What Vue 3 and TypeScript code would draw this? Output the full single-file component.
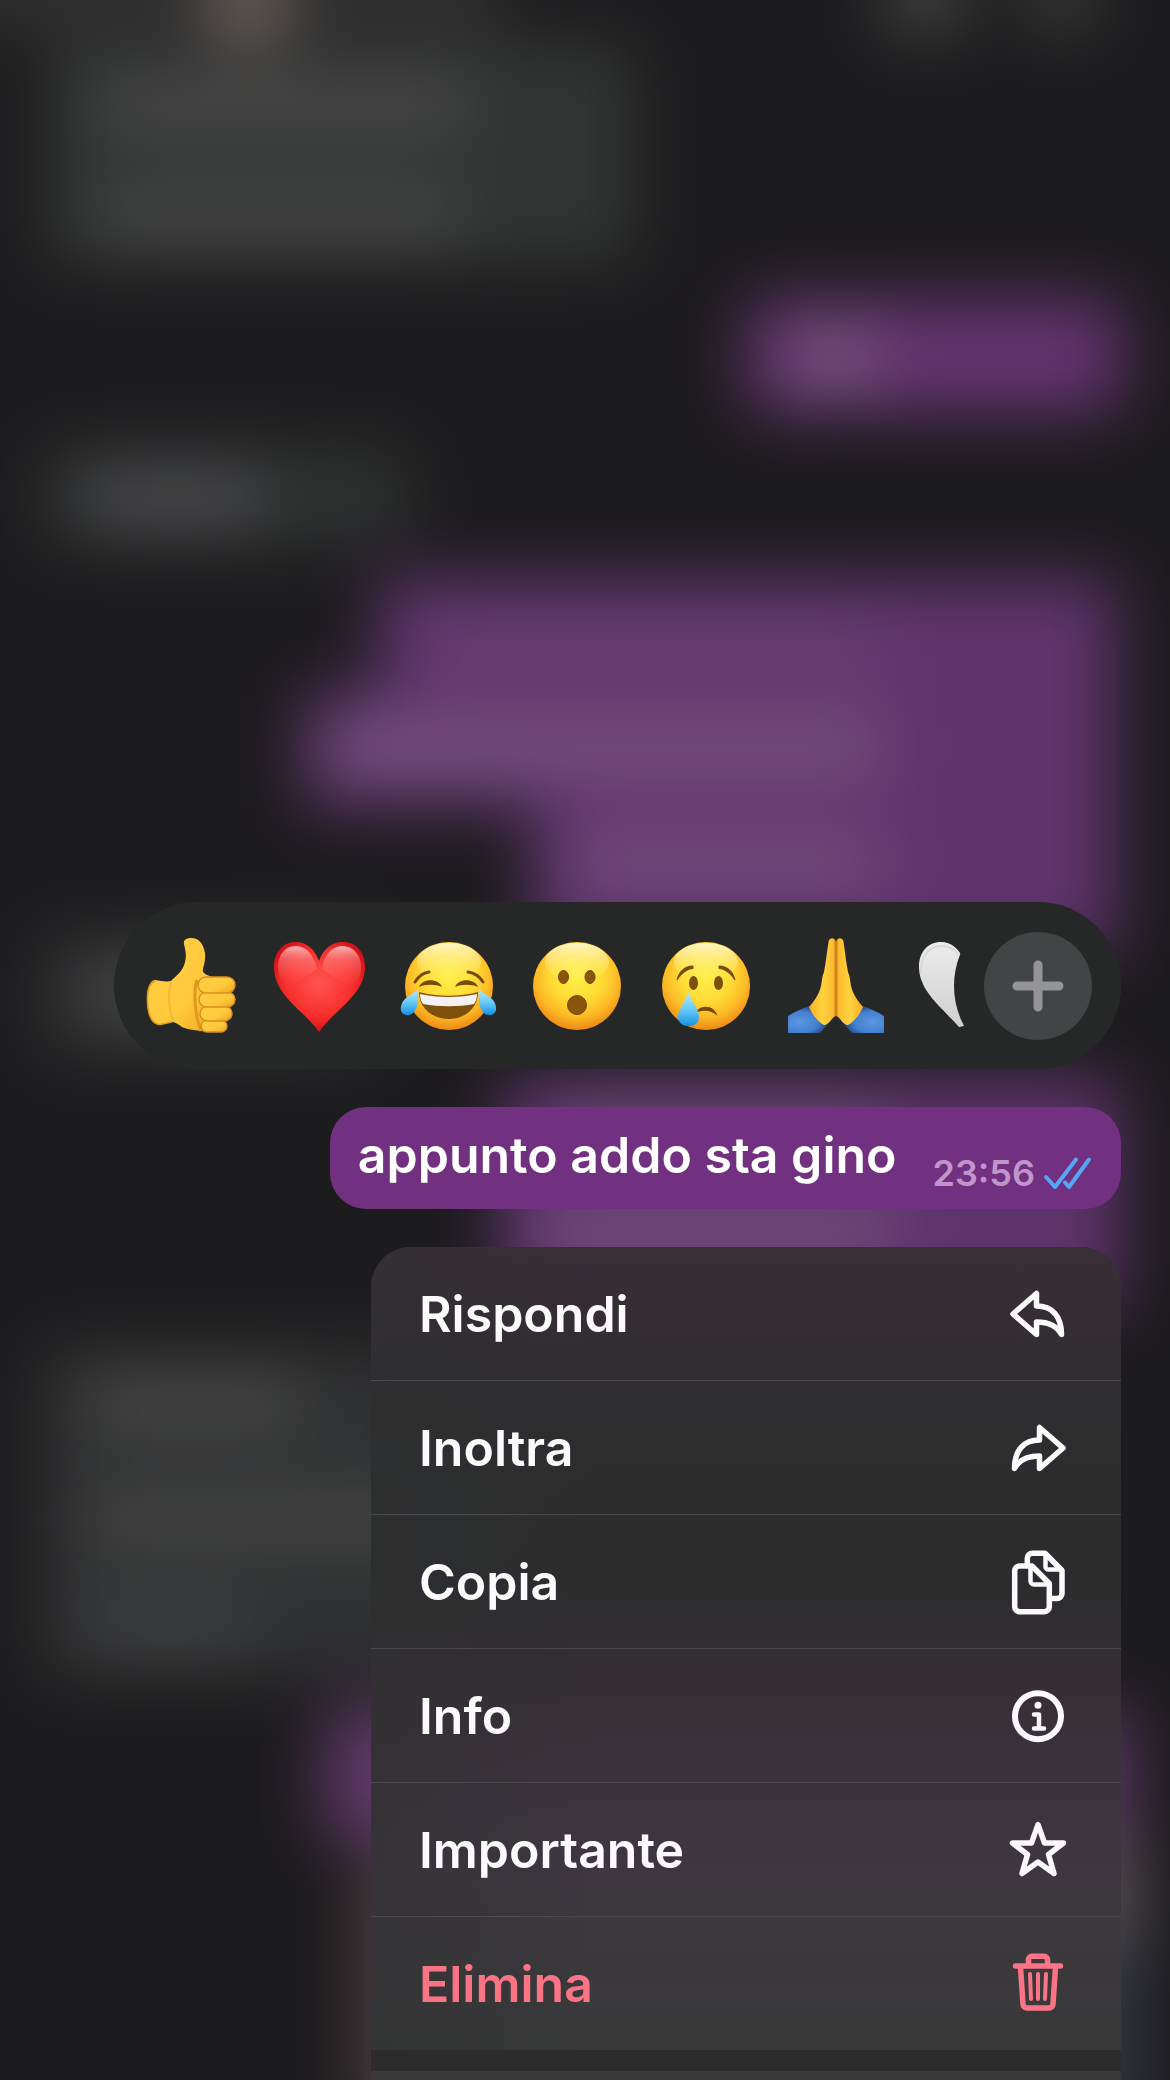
<script setup lang="ts">
interface Stroke {
  d: string
  width: number
}

interface MenuAction {
  label: string
  destructive?: boolean
  icon: Stroke[]
}

const actions: MenuAction[] = [
  {
    label: 'Rispondi',
    icon: [{ d: 'M28.5 9.5V22C44 22 53.5 32 53.5 50.5C49 42 41 38 28.5 38V50.5L5 30Z', width: 5.5 }],
  },
  {
    label: 'Inoltra',
    icon: [{ d: 'M31.5 9.5V22C16 22 6.5 32 6.5 50.5C11 42 19 38 31.5 38V50.5L55 30Z', width: 5.5 }],
  },
  {
    label: 'Copia',
    icon: [
      { d: 'M12 14H24L41.300 31.500V54.500A5 5 0 0 1 36.300 59.700H12A5 5 0 0 1 6.700 54.500V19A5 5 0 0 1 12 14Z', width: 5.5 },
      { d: 'M22.500 15V29A3.500 3.500 0 0 0 26 32.500H40', width: 4.5 },
      { d: 'M19.300 13V6.300A5 5 0 0 1 24.300 1.300H37L54 18.500V41.500A5 5 0 0 1 49 46.500H42', width: 5.5 },
      { d: 'M37.500 2V14A3 3 0 0 0 40.500 17.500H53', width: 4.5 },
    ],
  },
  {
    label: 'Info',
    icon: [
      { d: 'M30 7.200A23 23 0 1 1 30 53.200A23 23 0 1 1 30 7.200Z', width: 6 },
      { d: 'M30 19.200V19.300', width: 7 },
      { d: 'M26 28.500H31V42.500M26 42.500H36', width: 4.5 },
    ],
  },
  {
    label: 'Importante',
    icon: [
      { d: 'M30 4.700L36.500 23H55.500L40.500 34.500L46 53.500L30 42L14 53.500L19.500 34.500L4.500 23H23.500Z', width: 5.5 },
    ],
  },
  {
    label: 'Elimina',
    destructive: true,
    icon: [
      { d: 'M7.500 12H52.500', width: 5.5 },
      { d: 'M20.500 11V6A3.500 3.500 0 0 1 24 2.200H36A3.500 3.500 0 0 1 39.500 6V11', width: 5.5 },
      { d: 'M12.500 13L15 50A4 4 0 0 0 19 54H41A4 4 0 0 0 45 50L47.500 13', width: 5.5 },
      { d: 'M22 20L23 45M30 20V45M38 20L37 45', width: 4 },
    ],
  },
]
</script>

<template>
  <main class="screen">
    <svg class="backdrop" viewBox="0 0 1170 2080" preserveAspectRatio="none" aria-hidden="true">
      <defs>
        <filter
          id="soft"
          x="-200"
          y="-200"
          width="1570"
          height="2480"
          filterUnits="userSpaceOnUse"
          color-interpolation-filters="sRGB"
        >
          <feGaussianBlur stdDeviation="33" />
        </filter>
      </defs>
      <g filter="url(#soft)">
        <rect x="-200" y="-200" width="1570" height="2480" fill="#1c1b1d" />
        <rect x="-100" y="-60" width="600" height="90" fill="#303030" />
        <rect x="45" y="40" width="590" height="225" rx="20" fill="#323434" />
        <rect x="100" y="80" width="370" height="46" fill="#4d4c4c" />
        <rect x="100" y="192" width="360" height="46" fill="#4a4a4b" />
        <circle cx="248" cy="0" r="46" fill="#6c625c" />
        <circle cx="925" cy="-6" r="46" fill="#424242" />
        <circle cx="1060" cy="-6" r="40" fill="#3c3c3c" />

        <rect x="745" y="298" width="378" height="116" rx="26" fill="#63336f" />
        <rect x="795" y="332" width="80" height="52" fill="#7c5d7c" />

        <rect x="40" y="446" width="370" height="100" rx="26" fill="#2f3131" />
        <rect x="90" y="472" width="170" height="52" fill="#4e4e50" />

        <path d="M378 578H1115V955H532V808H304V692H378Z" fill="#5f346c" />
        <rect x="430" y="625" width="450" height="46" fill="#684272" />
        <rect x="330" y="722" width="550" height="50" fill="#7a5781" />
        <rect x="570" y="836" width="310" height="50" fill="#75507e" />

        <rect x="40" y="935" width="340" height="120" rx="26" fill="#303132" />
        <rect x="90" y="965" width="200" height="52" fill="#4a4a4b" />

        <rect x="500" y="1078" width="620" height="238" rx="26" fill="#5f346c" />
        <rect x="560" y="1108" width="320" height="44" fill="#725079" />
        <rect x="540" y="1208" width="350" height="48" fill="#75537e" />

        <rect x="40" y="1348" width="600" height="330" rx="20" fill="#303132" />
        <rect x="90" y="1380" width="210" height="46" fill="#4c4c4c" />
        <rect x="90" y="1496" width="400" height="46" fill="#4a4a4a" />
        <rect x="90" y="1604" width="160" height="44" fill="#424344" />

        <rect x="325" y="1708" width="805" height="136" rx="20" fill="#613a6a" />
        <rect x="362" y="1860" width="400" height="270" fill="#4f4245" />
        <rect x="755" y="1840" width="384" height="110" fill="#565153" />
        <rect x="755" y="1950" width="384" height="180" fill="#343847" />
      </g>
    </svg>

    <div class="reactions" role="toolbar" aria-label="Reazioni">
      <svg class="defs" width="0" height="0" aria-hidden="true">
        <defs>
          <radialGradient id="face" cx="50%" cy="38%" r="64%">
            <stop offset="0" stop-color="#fff04b" />
            <stop offset="0.450" stop-color="#ffdc35" />
            <stop offset="0.740" stop-color="#fdb925" />
            <stop offset="1" stop-color="#ea8314" />
          </radialGradient>
          <linearGradient id="shine" x1="0" y1="0" x2="0" y2="1">
            <stop offset="0" stop-color="#fffbe0" stop-opacity="0.850" />
            <stop offset="1" stop-color="#fff27a" stop-opacity="0" />
          </linearGradient>
          <linearGradient id="tear" x1="0" y1="0" x2="0" y2="1">
            <stop offset="0" stop-color="#b5e9fc" />
            <stop offset="0.500" stop-color="#6ccbf8" />
            <stop offset="1" stop-color="#1492e4" />
          </linearGradient>
          <linearGradient id="skin" x1="0" y1="0" x2="1" y2="1">
            <stop offset="0" stop-color="#ffcf45" />
            <stop offset="0.600" stop-color="#ffc93c" />
            <stop offset="1" stop-color="#eda41f" />
          </linearGradient>
          <radialGradient id="red" cx="50%" cy="45%" r="60%">
            <stop offset="0" stop-color="#fd5550" />
            <stop offset="0.600" stop-color="#f8302c" />
            <stop offset="1" stop-color="#cf0a14" />
          </radialGradient>
          <linearGradient id="gloss" x1="0" y1="0" x2="0" y2="1">
            <stop offset="0" stop-color="#ffd9d9" stop-opacity="0.950" />
            <stop offset="0.300" stop-color="#ff9a98" stop-opacity="0.600" />
            <stop offset="1" stop-color="#ff6a66" stop-opacity="0" />
          </linearGradient>
          <linearGradient id="pearl" x1="0" y1="0" x2="0" y2="1">
            <stop offset="0" stop-color="#ececec" />
            <stop offset="1" stop-color="#cfcfcf" />
          </linearGradient>
          <linearGradient id="palm" x1="0" y1="0" x2="1" y2="0">
            <stop offset="0" stop-color="#f9b022" />
            <stop offset="0.500" stop-color="#ffd23e" />
            <stop offset="0.900" stop-color="#fbbb2e" />
            <stop offset="1" stop-color="#c87816" />
          </linearGradient>
          <radialGradient id="sleeve" cx="25%" cy="60%" r="80%">
            <stop offset="0" stop-color="#5b97e2" />
            <stop offset="0.500" stop-color="#4480d0" />
            <stop offset="0.900" stop-color="#16315c" />
          </radialGradient>
        </defs>
      </svg>

      <div class="emoji-list">
        <button type="button" class="emoji" aria-label="Pollice in su">
          <svg viewBox="0 0 96 96">
            <path
              d="M41 6C40 1 45 0 48 0C55 0 60 4 62 15C63 24 59 31 60 34C63 37 66 38 70 39L78 60L70 93C60 94 46 92 39 89C35 86 32 84 29 84L17 87C8 87 4 74 4 62C4 51 7 42 12 42C18 43 24 44 28 43C34 37 40 33 42 24C44 17 42 11 41 6Z"
              fill="url(#skin)"
            />
            <path d="M12 43C6 45 4 54 4.500 64C5 76 8 86 17 86.500L29 84" fill="none" stroke="#e09a1b" stroke-width="1.500" />
            <path d="M28 44C25 56 25 72 31 84" fill="none" stroke="#f3b834" stroke-width="2" />
            <path d="M54 42C50 54 52 78 58 93" fill="none" stroke="#e0991c" stroke-width="3" />
            <g fill="url(#skin)" stroke="#d6901c" stroke-width="1.500">
              <rect x="58" y="82" width="26" height="12" rx="6" />
              <rect x="57" y="68" width="32" height="15" rx="7.500" />
              <rect x="56" y="54" width="36" height="15" rx="7.500" />
              <rect x="55" y="39" width="37" height="16" rx="8" />
            </g>
          </svg>
        </button>

        <button type="button" class="emoji" aria-label="Cuore rosso">
          <svg viewBox="0 0 96 96">
            <path
              d="M47 23C43 11 34 4 24 4C11 4 2 14 2 29C2 48 15 61 31 76C38 83 43 88 47 94C51 88 56 83 63 76C79 61 93 48 93 29C93 14 84 4 71 4C60 4 51 11 47 23Z"
              fill="url(#red)"
            />
            <path d="M45 31C42 17 34 8 24 8C13 8 6 17 6 29C6 38 9 44 16 50Z" fill="url(#gloss)" opacity="0.850" />
            <path d="M50 31C52 17 60 8 70 8C81 8 89 17 89 29C89 38 86 44 79 50Z" fill="url(#gloss)" opacity="0.850" />
          </svg>
        </button>

        <button type="button" class="emoji" aria-label="Lacrime di gioia">
          <svg viewBox="0 0 96 96">
            <circle cx="48" cy="48" r="44" fill="url(#face)" />
            <ellipse cx="48" cy="24" rx="32" ry="19" fill="url(#shine)" />
            <g fill="none" stroke="#7a4a0a" stroke-width="3" stroke-linecap="round">
              <path d="M14 44C17 39 22 35 28 34" />
              <path d="M82 44C79 39 74 35 67 34" />
            </g>
            <path d="M18 49C21 40 38 40 41 49C35 46 24 46 18 49Z" fill="#7a4a0a" />
            <path d="M54 49C57 40 74 40 77 49C71 46 60 46 54 49Z" fill="#7a4a0a" />
            <path d="M18 54C36 59 59 59 77 54C77 70 64 81 48 81C31 81 18 70 18 54Z" fill="#7f520c" />
            <path d="M19 56C37 60 58 60 76 56C76 60 75 63 73 66C58 69 38 69 22 66C20 63 19 60 19 56Z" fill="#f4f1f4" />
            <path d="M17 51C18 60 17 77 7 77C-3 77 -1 66 4 61C8 57 14 55 17 51Z" fill="url(#tear)" />
            <path d="M78 51C77 60 78 77 88 77C98 77 96 66 91 61C87 57 81 55 78 51Z" fill="url(#tear)" />
          </svg>
        </button>

        <button type="button" class="emoji" aria-label="Sorpresa">
          <svg viewBox="0 0 96 96">
            <circle cx="47" cy="48" r="44" fill="url(#face)" />
            <ellipse cx="47" cy="24" rx="32" ry="19" fill="url(#shine)" />
            <g fill="#8a5609" stroke="#744507" stroke-width="1">
              <ellipse cx="33.500" cy="39" rx="5" ry="6.500" />
              <ellipse cx="60" cy="39" rx="5" ry="6.500" />
              <circle cx="47" cy="67" r="9.500" />
            </g>
          </svg>
        </button>

        <button type="button" class="emoji" aria-label="Tristezza">
          <svg viewBox="0 0 96 96">
            <circle cx="47" cy="48" r="44" fill="url(#face)" />
            <ellipse cx="47" cy="24" rx="32" ry="19" fill="url(#shine)" />
            <path d="M18 42C20 33 26 28 34 28V30.500C28 31 23 35 18 42Z" fill="#7a4a0a" stroke="#7a4a0a" />
            <path d="M76 42C74 33 68 28 60 28V30.500C66 31 71 35 76 42Z" fill="#7a4a0a" stroke="#7a4a0a" />
            <ellipse cx="34.500" cy="45" rx="4.500" ry="7" fill="#7f4e08" />
            <ellipse cx="59.500" cy="45" rx="4.500" ry="7" fill="#7f4e08" />
            <path d="M38 72C45 66 56 68 58.500 78C52 72 46 72 39 74Z" fill="#7a4a0a" />
            <path d="M29.500 54C32 63 40 71 40 79C40 85 35 88 29.500 88C24 88 19 85 19 79C19 71 27 63 29.500 54Z" fill="url(#tear)" />
          </svg>
        </button>

        <button type="button" class="emoji" aria-label="Mani giunte">
          <svg viewBox="0 0 96 96">
            <g id="hand">
              <path d="M0 78C6 74 13 71 21 68L46 80C41 84 37 90 32 95H0Z" fill="url(#sleeve)" />
              <path
                d="M40.500 4C41 -1 47 -1 48 4V78C44 79 41 87 36 87C29 83 24 76 21 69C27 62 31 56 33 48C34 43 34 38 36 34C38 24 39 13 40.500 4Z"
                fill="url(#palm)"
              />
            </g>
            <use href="#hand" transform="translate(96 0) scale(-1 1)" />
          </svg>
        </button>

        <button type="button" class="emoji" aria-label="Cuore bianco">
          <svg viewBox="0 0 96 96">
            <path
              d="M47 23C43 11 34 4 24 4C11 4 2 14 2 29C2 46 14 60 26 72C33 80 38 84 42 89C51 88 56 83 63 76C79 61 93 48 93 29C93 14 84 4 71 4C60 4 51 11 47 23Z"
              fill="url(#pearl)"
            />
            <path d="M4 36C3 20 11 8 24 8C32 8 38 11 42 17" fill="none" stroke="#d8d8d8" stroke-width="2" />
          </svg>
        </button>
      </div>

      <button type="button" class="more" aria-label="Altre reazioni">
        <svg viewBox="0 0 52 52">
          <path d="M26 5V47M5 26H47" stroke="#949497" stroke-width="9" stroke-linecap="round" />
        </svg>
      </button>
    </div>

    <article class="bubble">
      <p class="message">appunto addo sta gino</p>
      <div class="meta">
        <time>23:56</time>
        <svg class="ticks" viewBox="0 0 50 34" role="img" aria-label="Letto">
          <path d="M3 21L12 31L33 3.500M22 26.500L26 31L46 3.500" />
        </svg>
      </div>
    </article>

    <nav class="menu" aria-label="Azioni messaggio">
      <ul class="group">
        <li v-for="action in actions" :key="action.label" class="row">
          <button type="button" class="action" :class="{ destructive: action.destructive }">
            <span>{{ action.label }}</span>
            <svg class="icon" viewBox="0 0 60 60" aria-hidden="true">
              <path v-for="stroke in action.icon" :key="stroke.d" :d="stroke.d" :stroke-width="stroke.width" />
            </svg>
          </button>
        </li>
      </ul>
      <div class="next-group"></div>
    </nav>
  </main>
</template>

<style>
body {
  background: #1c1b1d;
}
</style>

<style scoped>
.screen {
  position: relative;
  box-sizing: border-box;
  min-height: 100vh;
  padding-right: 49px;
  overflow: hidden;
  display: flex;
  flex-direction: column;
  justify-content: flex-end;
  align-items: flex-end;
  gap: 38px;
  background: #1c1b1d;
  color: #fbf8fe;
  font-family: Inter, "Liberation Sans", sans-serif;
}

.backdrop {
  position: absolute;
  inset: 0;
  width: 100%;
  height: 100%;
}

.defs {
  position: absolute;
}

button {
  margin: 0;
  padding: 0;
  border: 0;
  background: none;
  color: inherit;
  font: inherit;
  cursor: pointer;
}

.reactions {
  position: relative;
  box-sizing: border-box;
  width: calc(100% - 114px);
  height: 167px;
  padding: 0 29px;
  border-radius: 84px;
  overflow: hidden;
  display: flex;
  align-items: center;
  background: #262827;
}

.emoji-list {
  flex: 1;
  min-width: 0;
  display: flex;
  gap: 33px;
  overflow: hidden;
}

.emoji {
  flex: none;
  width: 96px;
  height: 96px;
}

.emoji svg {
  display: block;
  overflow: visible;
}

.more {
  flex: none;
  width: 108px;
  height: 108px;
  border-radius: 50%;
  display: flex;
  align-items: center;
  justify-content: center;
  background: #424545;
  box-shadow: 0 0 0 30px #262827;
}

.more svg {
  width: 52px;
  height: 52px;
}

.bubble {
  position: relative;
  box-sizing: border-box;
  height: 102px;
  padding: 0 28px;
  border-radius: 36px;
  display: flex;
  gap: 36px;
  background: #723081;
}

.message {
  margin: 0;
  color: #fff;
  font-size: 50px;
  font-weight: 600;
  line-height: 96px;
}

.meta {
  display: flex;
  align-items: center;
  gap: 8px;
  padding-top: 30px;
  color: #c095cb;
  font-size: 36px;
  font-weight: 600;
}

.ticks {
  width: 50px;
  height: 34px;
  fill: none;
  stroke: #55a7f6;
  stroke-width: 4;
  stroke-linecap: round;
  stroke-linejoin: round;
}

.menu {
  position: relative;
  width: calc(100% - 371px);
  border-radius: 40px 40px 0 0;
  overflow: hidden;
  display: flex;
  flex-direction: column;
  gap: 21px;
  background: #2c2c2c;
}

.group {
  margin: 0;
  padding: 0;
  list-style: none;
  background:
    linear-gradient(90deg, rgba(46, 48, 48, 0.5), rgba(46, 48, 48, 0) 30%),
    linear-gradient(
      #392f37,
      #302d31 15%,
      #2d2d2e 26%,
      #2c2c2d 42%,
      #352f34 54%,
      #3b333c 66%,
      #3e363f 74%,
      #3c383d 86%,
      #383939
    );
}

.row + .row {
  border-top: 1px solid #4b494d;
}

.action {
  box-sizing: border-box;
  width: 100%;
  height: 133px;
  padding: 0 53px 0 48px;
  display: flex;
  align-items: center;
  justify-content: space-between;
  font-size: 50px;
  font-weight: 600;
  text-align: left;
}

.destructive {
  color: #fb7485;
}

.icon {
  width: 60px;
  height: 60px;
  overflow: visible;
  fill: none;
  stroke: currentColor;
  stroke-linecap: round;
  stroke-linejoin: round;
}

.next-group {
  height: 9px;
  background: #383838;
}
</style>
